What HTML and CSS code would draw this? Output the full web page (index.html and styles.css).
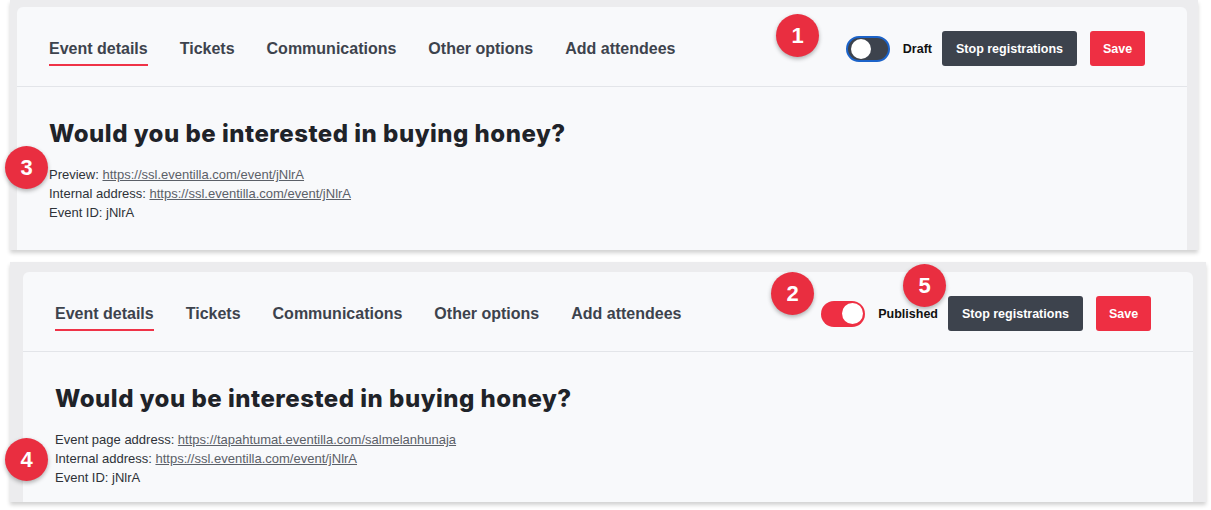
FILE: index.html
```html
<!DOCTYPE html>
<html lang="en">
<head>
    <meta charset="UTF-8">
    <title>Event publishing states</title>
    <link rel="stylesheet" href="styles.css">
</head>
<body>

    <div class="shot shot-draft">
        <div class="card">
            <div class="card-header">
                <nav class="tabs">
                    <span class="tab active">Event details</span>
                    <span class="tab">Tickets</span>
                    <span class="tab">Communications</span>
                    <span class="tab">Other options</span>
                    <span class="tab">Add attendees</span>
                </nav>
                <div class="actions">
                    <span class="toggle off focused"><span class="knob"></span></span>
                    <span class="state">Draft</span>
                    <button class="btn btn-dark">Stop registrations</button>
                    <button class="btn btn-red">Save</button>
                </div>
            </div>
            <div class="card-body">
                <h1 class="title">Would you be interested in buying honey?</h1>
                <div class="info">
                    <div>Preview: <a href="#">https://ssl.eventilla.com/event/jNlrA</a></div>
                    <div>Internal address: <a href="#">https://ssl.eventilla.com/event/jNlrA</a></div>
                    <div>Event ID: jNlrA</div>
                </div>
            </div>
        </div>
    </div>

    <div class="shot shot-published">
        <div class="card">
            <div class="card-header">
                <nav class="tabs">
                    <span class="tab active">Event details</span>
                    <span class="tab">Tickets</span>
                    <span class="tab">Communications</span>
                    <span class="tab">Other options</span>
                    <span class="tab">Add attendees</span>
                </nav>
                <div class="actions">
                    <span class="toggle on"><span class="knob"></span></span>
                    <span class="state">Published</span>
                    <button class="btn btn-dark">Stop registrations</button>
                    <button class="btn btn-red">Save</button>
                </div>
            </div>
            <div class="card-body">
                <h1 class="title">Would you be interested in buying honey?</h1>
                <div class="info">
                    <div>Event page address: <a href="#">https://tapahtumat.eventilla.com/salmelanhunaja</a></div>
                    <div>Internal address: <a href="#">https://ssl.eventilla.com/event/jNlrA</a></div>
                    <div>Event ID: jNlrA</div>
                </div>
            </div>
        </div>
    </div>

    <!-- numbered callouts over the screenshots -->
    <span class="badge" style="left: 776px; top: 14px;">1</span>
    <span class="badge" style="left: 771px; top: 272px;">2</span>
    <span class="badge" style="left: 5px; top: 146px;">3</span>
    <span class="badge" style="left: 5px; top: 438px;">4</span>
    <span class="badge" style="left: 903px; top: 264px;">5</span>

</body>
</html>
```

FILE: styles.css
```css
body {
    margin: 0;
    background-color: #ffffff;
    font-family: 'Liberation Sans', Arial, sans-serif;
    position: relative;
    height: 510px;
    overflow: hidden;
}
.shot {
    background-color: #ececee;
    margin-left: 10px;
    box-shadow: 0 3px 4px rgba(0, 0, 0, 0.18);
    box-sizing: border-box;
    display: flex;
}
.shot-draft {
    width: 1188px;
    height: 250px;
    padding: 7px 11px 0 7px;
}
.shot-published {
    width: 1196px;
    height: 240px;
    margin-top: 12px;
    padding: 10px 13px 0 13px;
}
.card {
    flex: 1;
    background-color: #f8f9fb;
    border-radius: 6px 6px 0 0;
}
.card-header {
    height: 79px;
    border-bottom: 1px solid #e3e5e9;
    display: flex;
    justify-content: space-between;
    padding: 0 42px 0 32px;
    box-sizing: content-box;
}
.tabs {
    display: flex;
    gap: 32px;
    padding-top: 32px;
}
.tab {
    font-size: 16px;
    font-weight: bold;
    color: #3d434d;
    line-height: 20px;
    height: 25px;
}
.tab.active {
    border-bottom: 2px solid #ef3347;
}
.actions {
    display: flex;
    align-items: center;
    height: 35px;
    margin-top: 24px;
}
.toggle {
    width: 44px;
    height: 26px;
    border-radius: 13px;
    box-sizing: border-box;
    position: relative;
    margin-right: 13px;
}
.toggle.off {
    background-color: #3d434d;
}
.toggle.focused {
    border: 2px solid #1c63c9;
}
.toggle.on {
    background-color: #ee2f43;
}
.knob {
    position: absolute;
    width: 20px;
    height: 20px;
    border-radius: 50%;
    background-color: #ffffff;
    top: 3px;
}
.toggle.off .knob {
    left: 3px;
    top: 1px;
}
.toggle.on .knob {
    right: 2px;
    width: 21px;
    height: 21px;
    top: 2px;
}
.state {
    font-size: 12.5px;
    font-weight: bold;
    color: #111111;
    margin-right: 10px;
}
.btn {
    height: 35px;
    border: none;
    border-radius: 3px;
    color: #ffffff;
    font-family: 'Liberation Sans', Arial, sans-serif;
    font-size: 12.5px;
    font-weight: bold;
    padding: 0 13px;
}
.btn-dark {
    background-color: #3d434d;
    width: 135px;
    margin-right: 13px;
}
.btn-red {
    background-color: #ee2f43;
    width: 55px;
}
.card-body {
    padding: 0 32px;
}
.title {
    font-family: Inter, 'Open Sans', sans-serif;
    font-weight: 800;
    font-size: 24px;
    letter-spacing: 0.5px;
    color: #1f2329;
    margin: 31px 0 0;
    line-height: 32px;
}
.info {
    margin-top: 15px;
    font-size: 13px;
    line-height: 19px;
    color: #2e3238;
}
.info a {
    color: #5b6068;
}
.badge {
    position: absolute;
    width: 43px;
    height: 43px;
    border-radius: 50%;
    background-color: #e92e40;
    color: #ffffff;
    font-family: 'Liberation Sans', Arial, sans-serif;
    font-weight: bold;
    font-size: 22px;
    display: flex;
    align-items: center;
    justify-content: center;
    box-shadow: 0 2px 4px rgba(0, 0, 0, 0.3);
}
```
